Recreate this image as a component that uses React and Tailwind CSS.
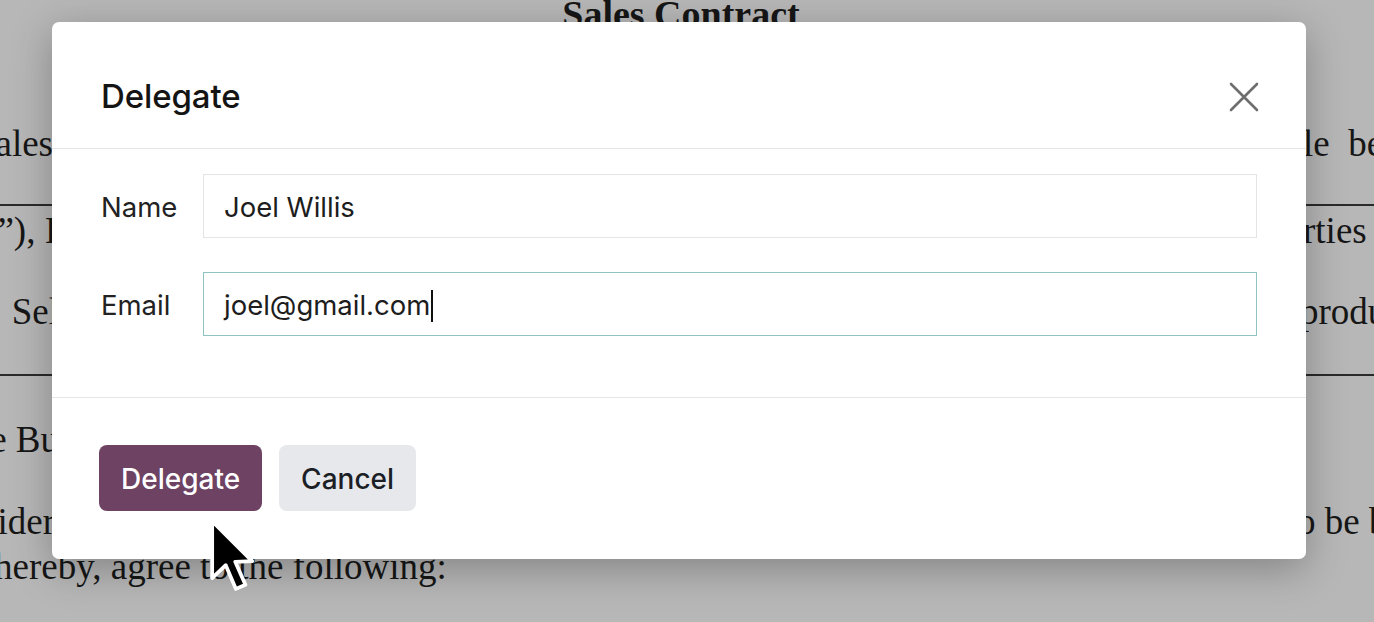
import React from "react";

function DocRow({ left, leftW, leftShift = 0, right, rightShift = 0, className = "" }) {
  return (
    <div className={"flex items-center whitespace-nowrap " + className}>
      <div className="flex shrink-0 justify-end overflow-hidden" style={{ width: leftW }}>
        <span style={{ marginRight: leftShift }}>{left}</span>
      </div>
      <div className="flex-1" />
      <div className="w-[68px] shrink-0 overflow-hidden">
        <span className="inline-block" style={{ marginLeft: rightShift }}>{right}</span>
      </div>
    </div>
  );
}

function Cursor() {
  return (
    <svg width="46" height="78" viewBox="0 0 13.5 23" className="absolute left-[208px] top-[517px]">
      <path
        d="M1.2 1.2 L1.2 18 L5.2 14.2 L8.2 21.2 L11 20 L8 13.2 L13 13 Z"
        fill="#000"
        stroke="#fff"
        strokeWidth="1.1"
        strokeLinejoin="round"
      />
    </svg>
  );
}

export default function App() {
  return (
    <div className="relative h-[622px] w-[1374px] overflow-hidden bg-[#b7b7b7]">
      {/* dimmed document behind */}
      <div
        className="flex flex-col text-[37px] text-[#161616]"
        style={{ fontFamily: '"Liberation Serif", "Times New Roman", serif' }}
      >
        <div className="mt-[-6px] flex h-[40px] items-center justify-center pr-[12px] text-[38px] font-bold leading-[40px]">
          Sales Contract
        </div>
        <DocRow className="mt-[90px] h-[40px]" left="Sales" leftW={53} right={"le\u00a0\u00a0be"} rightShift={-3} />
        <div className="mt-[40px] h-[2px] bg-[#2a2a2a]" />
        <DocRow className="mt-[5px] h-[40px]" left={"”), I"} leftW={57} right="rties" rightShift={-3} />
        <DocRow className="mt-[41px] h-[40px]" left="Sel" leftW={59} right="produ" rightShift={-6} />
        <div className="mt-[42px] h-[2px] bg-[#2a2a2a]" />
        <DocRow className="mt-[44px] h-[40px]" left="the Bu" leftW={59} right="" />
        <DocRow className="mt-[42px] h-[40px]" left="consider" leftW={55} right={"o be bound"} rightShift={-9} />
        <div className="mt-[5px] flex h-[40px] items-center whitespace-nowrap">
          <span className="ml-[-6px]">hereby, agree to the following:</span>
        </div>
      </div>

      {/* modal */}
      <div
        className="absolute left-[52px] top-[22px] flex w-[1254px] flex-col rounded-[7px] bg-white shadow-[0_10px_40px_rgba(0,0,0,0.28)]"
        style={{ fontFamily: 'Inter, "Noto Sans", sans-serif' }}
      >
        <div className="flex h-[127px] items-center justify-between border-b border-[#e6e6e6] pl-[49px] pr-[46px] pt-[24px]">
          <div className="text-[33px] font-medium tracking-[-0.1px] text-[#141414]">Delegate</div>
          <svg width="32" height="32" viewBox="0 0 32 32">
            <path d="M3 3 L29 29 M29 3 L3 29" stroke="#6e6e6e" strokeWidth="2.6" strokeLinecap="round" />
          </svg>
        </div>

        <div className="flex flex-col gap-[34px] border-b border-[#e6e6e6] pb-[61px] pl-[49px] pr-[49px] pt-[25px] text-[27.5px] text-[#1d1d1d]">
          <div className="flex items-center">
            <div className="w-[102px] shrink-0 pt-[3px] text-[#222]">Name</div>
            <div className="flex h-[64px] flex-1 items-center border border-[#e4e4e4] pl-[20px] pt-[3px]">Joel Willis</div>
          </div>
          <div className="flex items-center">
            <div className="w-[102px] shrink-0 pt-[3px] text-[#222]">Email</div>
            <div className="flex h-[64px] flex-1 items-center border-[1.5px] border-[#8fc3c1] pl-[20px] pt-[3px]">
              joel@gmail.com
              <span className="ml-[1px] inline-block h-[32px] w-[2px] bg-[#111]" />
            </div>
          </div>
        </div>

        <div className="flex gap-[17px] pb-[48px] pl-[47px] pt-[47px] text-[28px] font-medium">
          <button className="flex h-[66px] items-center rounded-[8px] bg-[#6d4262] px-[22px] pt-[2px] text-white">
            Delegate
          </button>
          <button className="flex h-[66px] items-center rounded-[8px] bg-[#e7e8ec] px-[22px] pt-[2px] text-[#1c1f26]">
            Cancel
          </button>
        </div>
      </div>

      <Cursor />
    </div>
  );
}
